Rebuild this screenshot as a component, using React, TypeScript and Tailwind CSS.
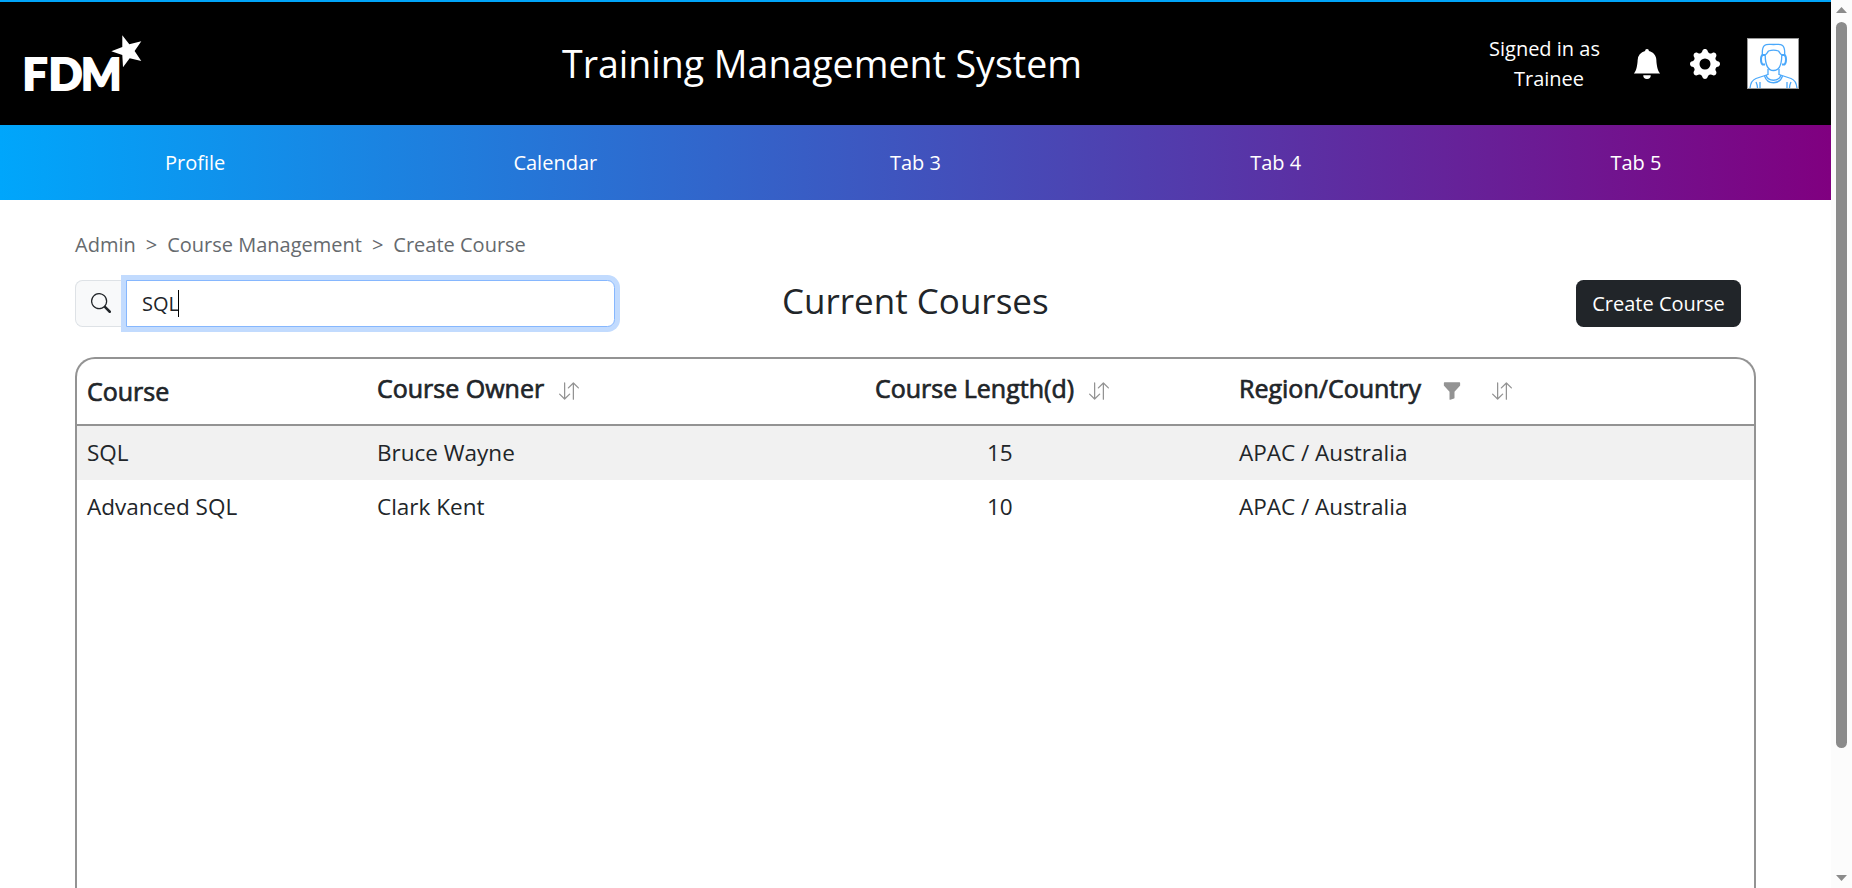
import { BsSearch, BsArrowDownUp, BsFunnelFill, BsBellFill, BsGearFill } from "react-icons/bs";

const tabs = ["Profile", "Calendar", "Tab 3", "Tab 4", "Tab 5"];

const courses = [
  { name: "SQL", owner: "Bruce Wayne", length: 15, region: "APAC / Australia" },
  { name: "Advanced SQL", owner: "Clark Kent", length: 10, region: "APAC / Australia" },
];

function Logo() {
  return (
    <svg width="124" height="85" viewBox="0 0 124 85" fill="#fff" className="block">
      <g fontFamily="Lato, sans-serif" fontWeight="900" fontSize="44" stroke="#fff" strokeWidth="1.8">
        <text x="-0.500" y="69" textLength="25" lengthAdjust="spacingAndGlyphs">F</text>
        <text x="25.500" y="69" textLength="34" lengthAdjust="spacingAndGlyphs">D</text>
        <text x="58" y="69" textLength="40.500" lengthAdjust="spacingAndGlyphs">M</text>
      </g>
      <path d="M99.3 14.3 106.3 23.3 118.3 20.3 111.6 30 118.3 40 106.7 37.3 100 46.3 99.3 34 88.3 30.3 99.3 26z" />
    </svg>
  );
}

function Avatar() {
  return (
    <div className="h-[51px] w-[52px] overflow-hidden border border-[#999] bg-white">
      <svg width="50" height="49" viewBox="0 0 50 49" fill="none" stroke="#4aa8fb" strokeWidth="1.3">
        <path d="M14.500 17C13 2.500 20 5.500 25.500 5.500S38 2.500 36.500 17" />
        <path d="M17 16c2-1 2.500-3 3.500-4 3-1 7-1 10 0 1 1 1.500 3 3.500 4" />
        <path d="M17.200 16c0 10 3 15.500 8.300 15.500S33.800 26 33.800 16" />
        <path d="M17 16h-2.500c-2 1-2 8 0 9.500H17M34 16h2.500c2 1 2 8 0 9.500H34" strokeWidth="2" />
        <path d="M20 30v6M31 30v6M18 36c2 7 13 7 15 0M16.500 37c3 9 15 9 18 0" />
        <path d="M20 35.500 8 39.500c-4 1.500-5.500 5-6 9.500M31 35.500l12 4c4 1.500 5.500 5 6 9.500M8 43c1 2 1.500 4 1.500 6M12 43v6M43 43c-1 2-1.500 4-1.500 6M39 43v6" />
      </svg>
    </div>
  );
}

function Scrollbar() {
  return (
    <div className="flex h-full w-[21px] shrink-0 flex-col items-center bg-[#fcfcfc] pt-[7px] pb-[7px]">
      <svg width="11" height="6" viewBox="0 0 11 6" fill="#8b8b8b"><path d="M5.500 0 11 6H0z" /></svg>
      <div className="mt-[9px] h-[726px] w-[11px] rounded-full bg-[#8b8b8b]" />
      <svg className="mt-auto" width="11" height="6" viewBox="0 0 11 6" fill="#8b8b8b"><path d="M5.500 6 11 0H0z" /></svg>
    </div>
  );
}

export default function App() {
  return (
    <div className="flex h-[888px] w-[1852px] overflow-hidden bg-white font-['Open_Sans',sans-serif] text-[20px] leading-[30px] text-[#212529]">
      <div className="flex h-full w-[1831px] flex-col">
        <header className="flex h-[125px] shrink-0 items-center border-t-2 border-[#00a4f9] bg-black pr-8 pl-[23px] text-white">
          <div className="w-[539px]"><Logo /></div>
          <h1 className="w-[521px] whitespace-nowrap pt-px text-[37.500px] leading-[48px]">Training Management System</h1>
          <div className="ml-auto flex items-center">
            <div className="mr-[33px] w-[110px] whitespace-nowrap">
              <div>Signed in as</div>
              <div className="pl-[25px]">Trainee</div>
            </div>
            <BsBellFill className="mr-[28px] size-[30px]" />
            <BsGearFill className="mr-[27px] size-[30px]" />
            <Avatar />
          </div>
        </header>
        <nav className="grid h-[75px] shrink-0 grid-cols-5 items-center bg-linear-to-r/srgb from-[#00a6fb] to-[#800080] px-[15px] text-center text-white">
          {tabs.map((tab) => <a key={tab}>{tab}</a>)}
        </nav>
        <main className="flex grow flex-col px-[75px] pt-[30px]">
          <div className="flex gap-[10px] text-[#666a6e]">
            <span>Admin</span><span>&gt;</span><span>Course Management</span><span>&gt;</span><span>Create Course</span>
          </div>
          <div className="mt-5 flex h-[47px] items-start">
            <div className="flex h-[47px] w-[540px]">
              <div className="flex w-[51px] items-center rounded-l-[7.500px] border border-r-0 border-[#dee2e6] bg-[#f8f9fa] pb-px pl-[15px]">
                <BsSearch className="size-5" />
              </div>
              <div className="flex grow items-center rounded-r-[7.500px] border border-[#86b7fe] bg-white pl-[15px] shadow-[0_0_0_5px_#c2dbfe]">
                <span className="-mr-px">SQL</span>
                <span className="h-[27px] w-px bg-black" />
              </div>
            </div>
            <h2 className="ml-[167px] whitespace-nowrap text-[35px] leading-[42px]">Current Courses</h2>
            <button className="mr-[15px] ml-auto h-[47px] w-[165px] whitespace-nowrap rounded-[7.500px] bg-[#212529] text-white">Create Course</button>
          </div>
          <section className="mt-[30px] flex grow flex-col rounded-t-[20px] border-2 border-b-0 border-[#939393]">
            <div className="grid h-[67px] shrink-0 grid-cols-[290px_498px_364px_1fr] items-start border-b-2 border-[#939393] pt-[10px] pl-[10px] text-[25px] leading-[38px] [-webkit-text-stroke:0.7px_#212529]">
              <div className="pt-[3px]">Course</div>
              <div className="flex items-center gap-[15px]"><span>Course Owner</span><BsArrowDownUp className="mt-[5px] size-5 text-[#939393]" /></div>
              <div className="flex items-center gap-[15px]"><span>Course Length(d)</span><BsArrowDownUp className="mt-[5px] size-5 text-[#939393]" /></div>
              <div className="flex items-center"><span>Region/Country</span><BsFunnelFill className="mt-[5px] ml-[21px] size-5 text-[#939393]" /><BsArrowDownUp className="mt-[5px] ml-[30px] size-5 text-[#939393]" /></div>
            </div>
            {courses.map((course) => (
              <div key={course.name} className="grid h-[54px] shrink-0 grid-cols-[290px_498px_364px_1fr] items-center pb-px pl-[10px] text-[22.500px] odd:bg-white even:bg-[#f1f1f1]">
                <span>{course.name}</span>
                <span>{course.owner}</span>
                <span className="pl-[112px]">{course.length}</span>
                <span>{course.region}</span>
              </div>
            ))}
          </section>
        </main>
      </div>
      <Scrollbar />
    </div>
  );
}
